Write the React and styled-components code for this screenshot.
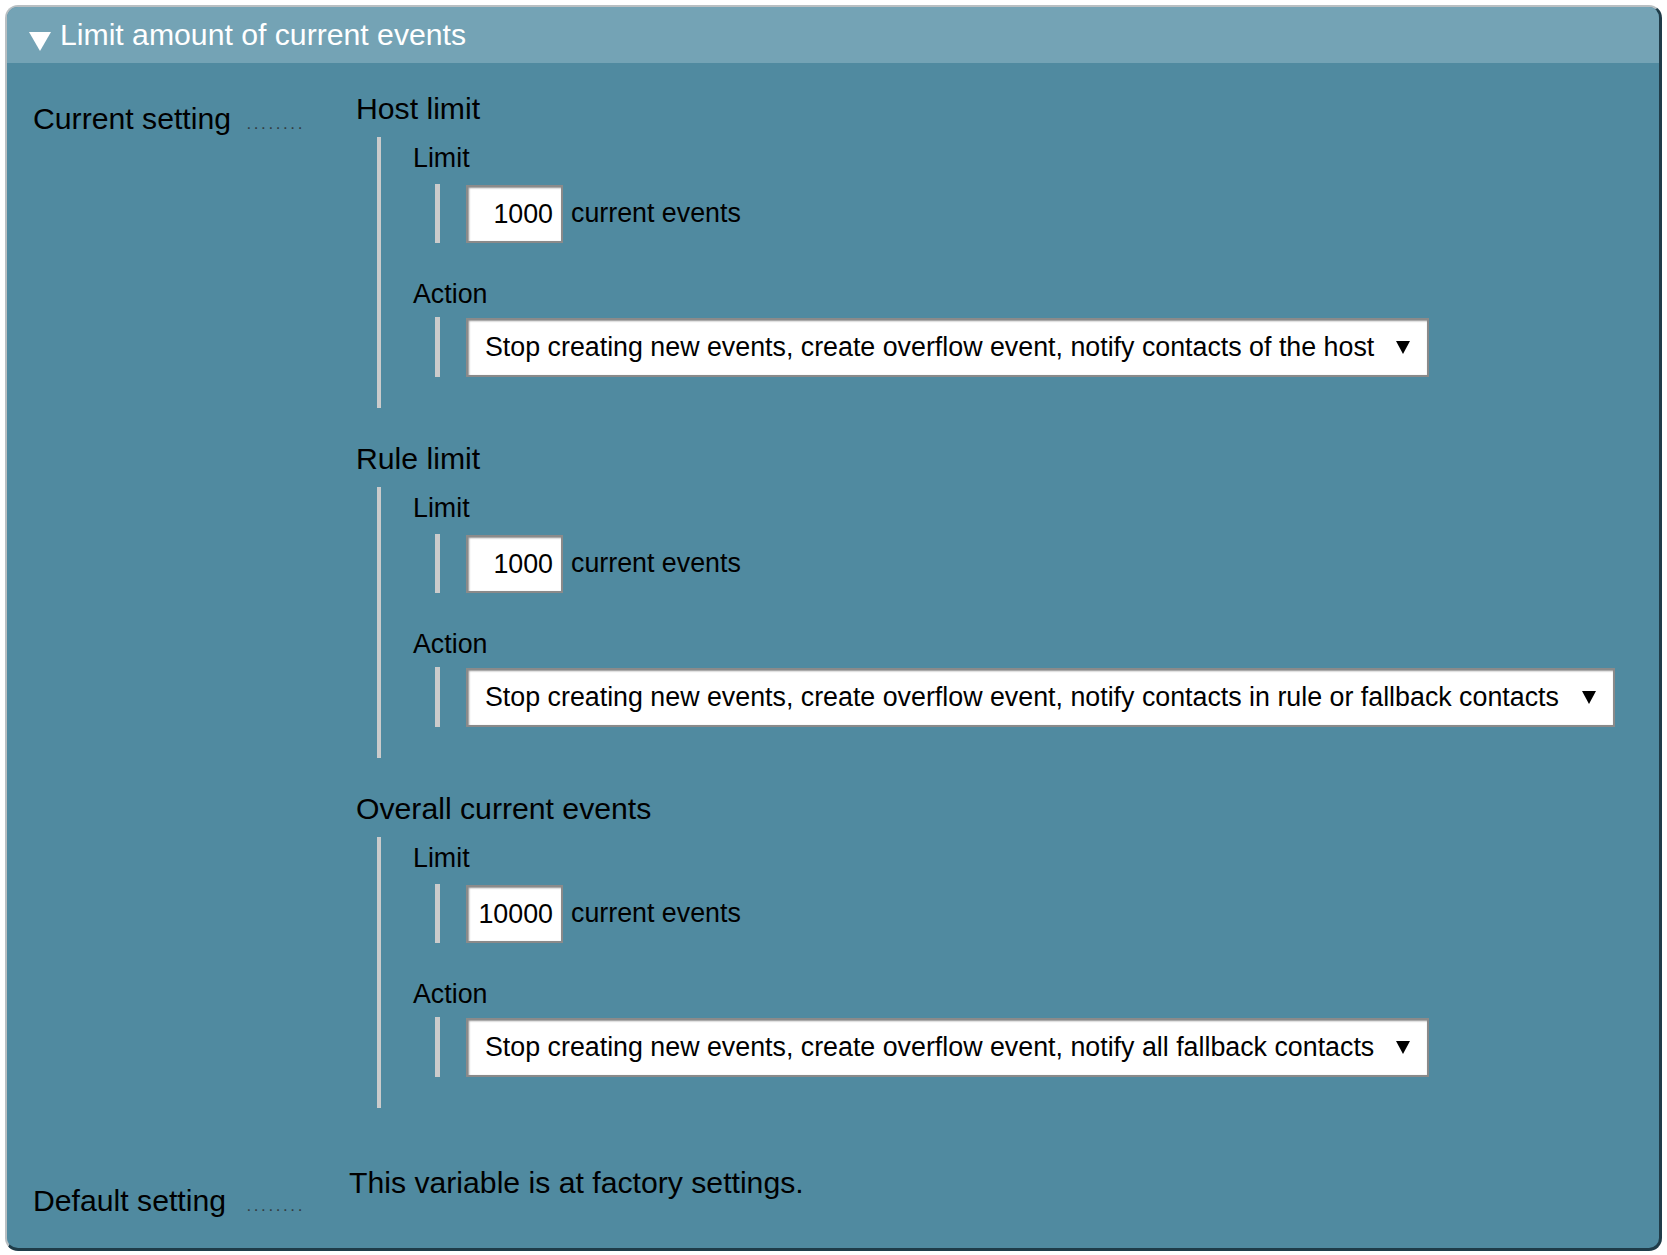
import React from "react";
import styled, { createGlobalStyle } from "styled-components";

const GlobalStyle = createGlobalStyle`
  html, body {
    margin: 0;
    padding: 0;
    background: #ffffff;
  }
  body {
    font-family: "Liberation Sans", Arial, sans-serif;
    color: #000;
  }
`;

const sections = [
  {
    id: 1,
    title: "Host limit",
    limit: "1000",
    action: "Stop creating new events, create overflow event, notify contacts of the host",
    width: 963,
  },
  {
    id: 2,
    title: "Rule limit",
    limit: "1000",
    action: "Stop creating new events, create overflow event, notify contacts in rule or fallback contacts",
    width: 1149,
  },
  {
    id: 3,
    title: "Overall current events",
    limit: "10000",
    action: "Stop creating new events, create overflow event, notify all fallback contacts",
    width: 963,
  },
];

const Page = styled.div`
  padding: 5px;
`;

const Panel = styled.div`
  width: 1657px;
  box-sizing: border-box;
  border-radius: 13px;
  border-top: 2px solid #b9bfc2;
  border-left: 2px solid #b9bfc2;
  border-right: 3px solid #1f3c49;
  border-bottom: 3px solid #1f3c49;
  background: #508aa0;
  overflow: hidden;
`;

const Header = styled.div`
  height: 56px;
  display: flex;
  align-items: flex-start;
  background: #74a3b5;
  padding-left: 22px;
`;

const Toggle = styled.svg`
  margin-top: 25px;
  flex: none;
`;

const HeaderTitle = styled.div`
  margin-left: 9px;
  font-size: 30.2px;
  line-height: 56px;
  color: #ffffff;
  white-space: nowrap;
`;

const Body = styled.div`
  display: grid;
  grid-template-columns: 342px 1fr;
  row-gap: 57px;
  padding: 28px 0 29px 0;
`;

const Legend = styled.div`
  display: flex;
  align-items: baseline;
  width: 298px;
  box-sizing: border-box;
  padding-left: 26px;
  padding-top: ${(p) => p.$top}px;
  font-size: 30.2px;
  line-height: 36px;
  white-space: nowrap;
`;

const Dots = styled.span`
  margin-left: auto;
  font-size: 17px;
  line-height: 17px;
  letter-spacing: 2.6px;
  color: #333d42;
  white-space: nowrap;
`;

const Content = styled.div`
  display: flex;
  flex-direction: column;
`;

const Section = styled.div`
  margin-left: 7px;
  margin-top: ${(p) => p.$top}px;
`;

const SectionTitle = styled.div`
  font-size: 30.2px;
  line-height: 36px;
`;

const Group = styled.div`
  margin-left: 21px;
  margin-top: 10px;
  border-left: 4px solid #cbcbcb;
  padding: 5px 0 31px 32px;
`;

const SubLabel = styled.div`
  font-size: 26.8px;
  line-height: 32px;
  margin-top: ${(p) => p.$top || 0}px;
`;

const ValueRow = styled.div`
  display: flex;
  align-items: flex-end;
  height: ${(p) => p.$h}px;
  margin-left: 22px;
  margin-top: ${(p) => p.$top}px;
  border-left: 5px solid #cbcbcb;
  padding-left: 26px;
`;

const NumberBox = styled.div`
  width: 97px;
  height: 58px;
  box-sizing: border-box;
  background: #ffffff;
  border: 2px solid #8a8a8a;
  box-shadow: inset 1px 1px 2px rgba(0, 0, 0, 0.45);
  font-size: 26.8px;
  line-height: 54px;
  text-align: right;
  padding-right: 8px;
`;

const Unit = styled.span`
  align-self: center;
  margin-left: 8px;
  font-size: 26.8px;
`;

const Select = styled.div`
  width: ${(p) => p.$w}px;
  height: 59px;
  box-sizing: border-box;
  display: flex;
  align-items: center;
  justify-content: space-between;
  background: #ffffff;
  border: 2px solid #8a8a8a;
  box-shadow: inset 1px 1px 2px rgba(0, 0, 0, 0.45);
  padding: 0 17px 0 17px;
  font-size: 26.8px;
  white-space: nowrap;
`;

const Arrow = styled.svg`
  flex: none;
`;

const Note = styled.div`
  font-size: 30.2px;
  line-height: 36px;
  white-space: nowrap;
`;

function LimitSection({ data, top }) {
  return (
    <Section $top={top}>
      <SectionTitle>{data.title}</SectionTitle>
      <Group>
        <SubLabel>Limit</SubLabel>
        <ValueRow $h={59} $top={10}>
          <NumberBox>{data.limit}</NumberBox>
          <Unit>current events</Unit>
        </ValueRow>
        <SubLabel $top={35}>Action</SubLabel>
        <ValueRow $h={60} $top={7}>
          <Select $w={data.width}>
            <span>{data.action}</span>
            <Arrow width="14" height="13" viewBox="0 0 14 13">
              <polygon points="0,0 14,0 7,13" fill="#000" />
            </Arrow>
          </Select>
        </ValueRow>
      </Group>
    </Section>
  );
}

export default function App() {
  return (
    <Page>
      <GlobalStyle />
      <Panel>
        <Header>
          <Toggle width="22" height="19" viewBox="0 0 22 19">
            <polygon points="0,0 22,0 11,19" fill="#ffffff" />
          </Toggle>
          <HeaderTitle>Limit amount of current events</HeaderTitle>
        </Header>
        <Body>
          <Legend $top={10}>
            Current setting
            <Dots>........</Dots>
          </Legend>
          <Content>
            {sections.map((s, i) => (
              <LimitSection key={s.id} data={s} top={i === 0 ? 0 : 33} />
            ))}
          </Content>
          <Legend $top={18}>
            Default setting
            <Dots>........</Dots>
          </Legend>
          <Note>This variable is at factory settings.</Note>
        </Body>
      </Panel>
    </Page>
  );
}
